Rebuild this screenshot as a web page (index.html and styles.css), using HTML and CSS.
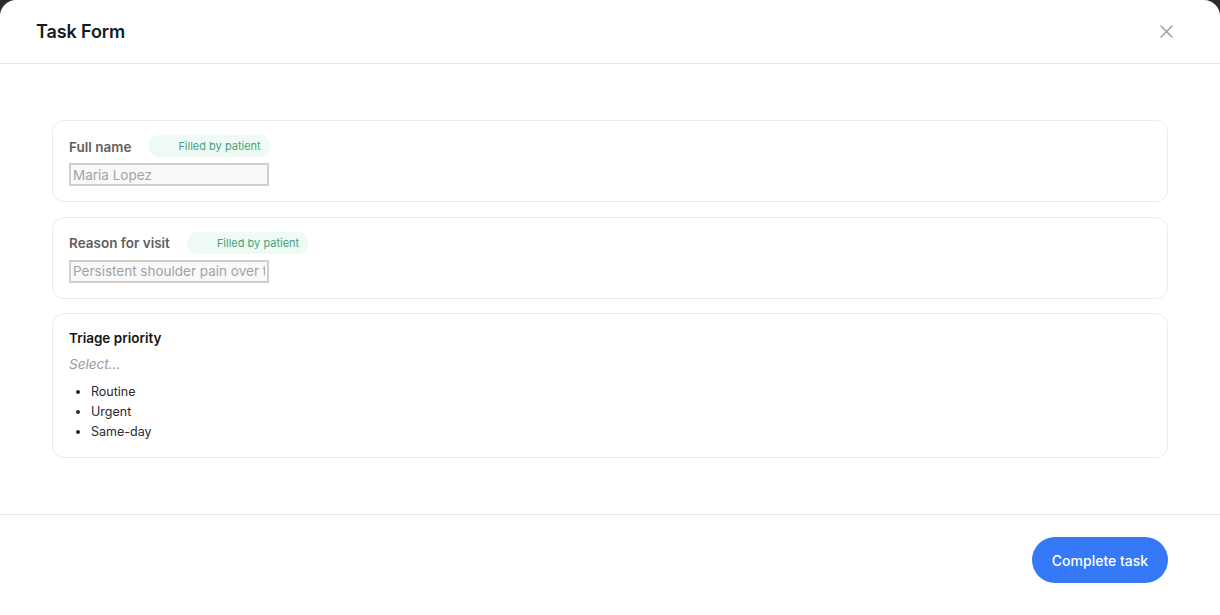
FILE: index.html
```html
<!DOCTYPE html>
<html lang="en">
<head>
<meta charset="utf-8">
<title>Task Form</title>
<link rel="stylesheet" href="styles.css">
</head>
<body>
<div class="modal">
  <header class="modal-header">
    <h1 class="modal-title">Task Form</h1>
    <button class="close-btn" aria-label="Close">
      <svg width="13" height="13" viewBox="0 0 13 13" fill="none" stroke="currentColor" stroke-width="1.5" stroke-linecap="round"><path d="M1 1L12 12M12 1L1 12"/></svg>
    </button>
  </header>
  <main class="modal-body">
    <section class="card card-readonly">
      <div class="label-row">
        <span class="field-label">Full name</span>
        <span class="badge">Filled by patient</span>
      </div>
      <input class="field-input" type="text" value="Maria Lopez" disabled>
    </section>
    <section class="card card-readonly">
      <div class="label-row">
        <span class="field-label">Reason for visit</span>
        <span class="badge">Filled by patient</span>
      </div>
      <input class="field-input" type="text" value="Persistent shoulder pain over the last two weeks" disabled>
    </section>
    <section class="card">
      <div class="label-row">
        <span class="field-label field-label-active">Triage priority</span>
      </div>
      <div class="select-placeholder">Select...</div>
      <ul class="option-list">
        <li>Routine</li>
        <li>Urgent</li>
        <li>Same-day</li>
      </ul>
    </section>
  </main>
  <footer class="modal-footer">
    <button class="primary-btn">Complete task</button>
  </footer>
</div>
</body>
</html>
```
FILE: styles.css
```css
* { box-sizing: border-box; }
html, body { margin: 0; padding: 0; }
body {
  background: #2b2b2b;
  font-family: Inter, "Noto Sans", sans-serif;
  height: 615px;
  overflow: hidden;
}
.modal {
  background: #ffffff;
  border-radius: 16px 16px 0 0;
  min-height: 640px;
}
.modal-header {
  height: 64px;
  display: flex;
  align-items: center;
  justify-content: space-between;
  padding: 0 47px 0 36px;
  border-bottom: 1px solid #e7e7e9;
}
.modal-title {
  margin: 0;
  font-size: 18px;
  font-weight: 600;
  color: #161a23;
  letter-spacing: -0.1px;
}
.close-btn {
  background: none;
  border: none;
  padding: 0;
  color: #9aa0ab;
  display: flex;
  cursor: pointer;
}
.modal-body {
  padding: 56px 52px 56px;
  display: flex;
  flex-direction: column;
  gap: 14.5px;
}
.card {
  border: 1px solid #ebebee;
  border-radius: 12px;
  padding: 14px 16px 15px;
}
.label-row {
  display: flex;
  align-items: center;
  gap: 17px;
  line-height: 20px;
}
.field-label {
  font-size: 13.5px;
  font-weight: 600;
  color: #5e5e63;
  padding-top: 1px;
}
.field-label-active { color: #141414; padding-top: 0; }
.badge {
  background: #eefbf4;
  color: #47a07c;
  font-size: 11px;
  border-radius: 11px;
  height: 22px;
  line-height: 22px;
  padding: 0 9px 0 30px;
}
.field-input {
  display: block;
  margin-top: 6px;
  width: 200px;
  height: 23px;
  border: 2px solid #cfcfcf;
  background: #f9f9f9;
  color: #a0a3aa;
  font-family: Inter, "Noto Sans", sans-serif;
  font-size: 13.5px;
  padding: 0 2px;
}
.select-placeholder {
  margin-top: 6px;
  font-size: 13.5px;
  line-height: 20px;
  font-style: italic;
  color: #9a9aa0;
}
.option-list {
  margin: 8px 0 0;
  padding-left: 22px;
  font-size: 12.5px;
  line-height: 20px;
  color: #2a2a2e;
}
.modal-footer {
  border-top: 1px solid #e7e7e9;
  padding: 22px 52px;
  display: flex;
  justify-content: flex-end;
}
.primary-btn {
  background: #3579f6;
  color: #ffffff;
  border: none;
  border-radius: 23px;
  height: 46px;
  width: 136px;
  font-family: Inter, "Noto Sans", sans-serif;
  font-size: 14px;
  font-weight: 500;
  cursor: pointer;
}
```
